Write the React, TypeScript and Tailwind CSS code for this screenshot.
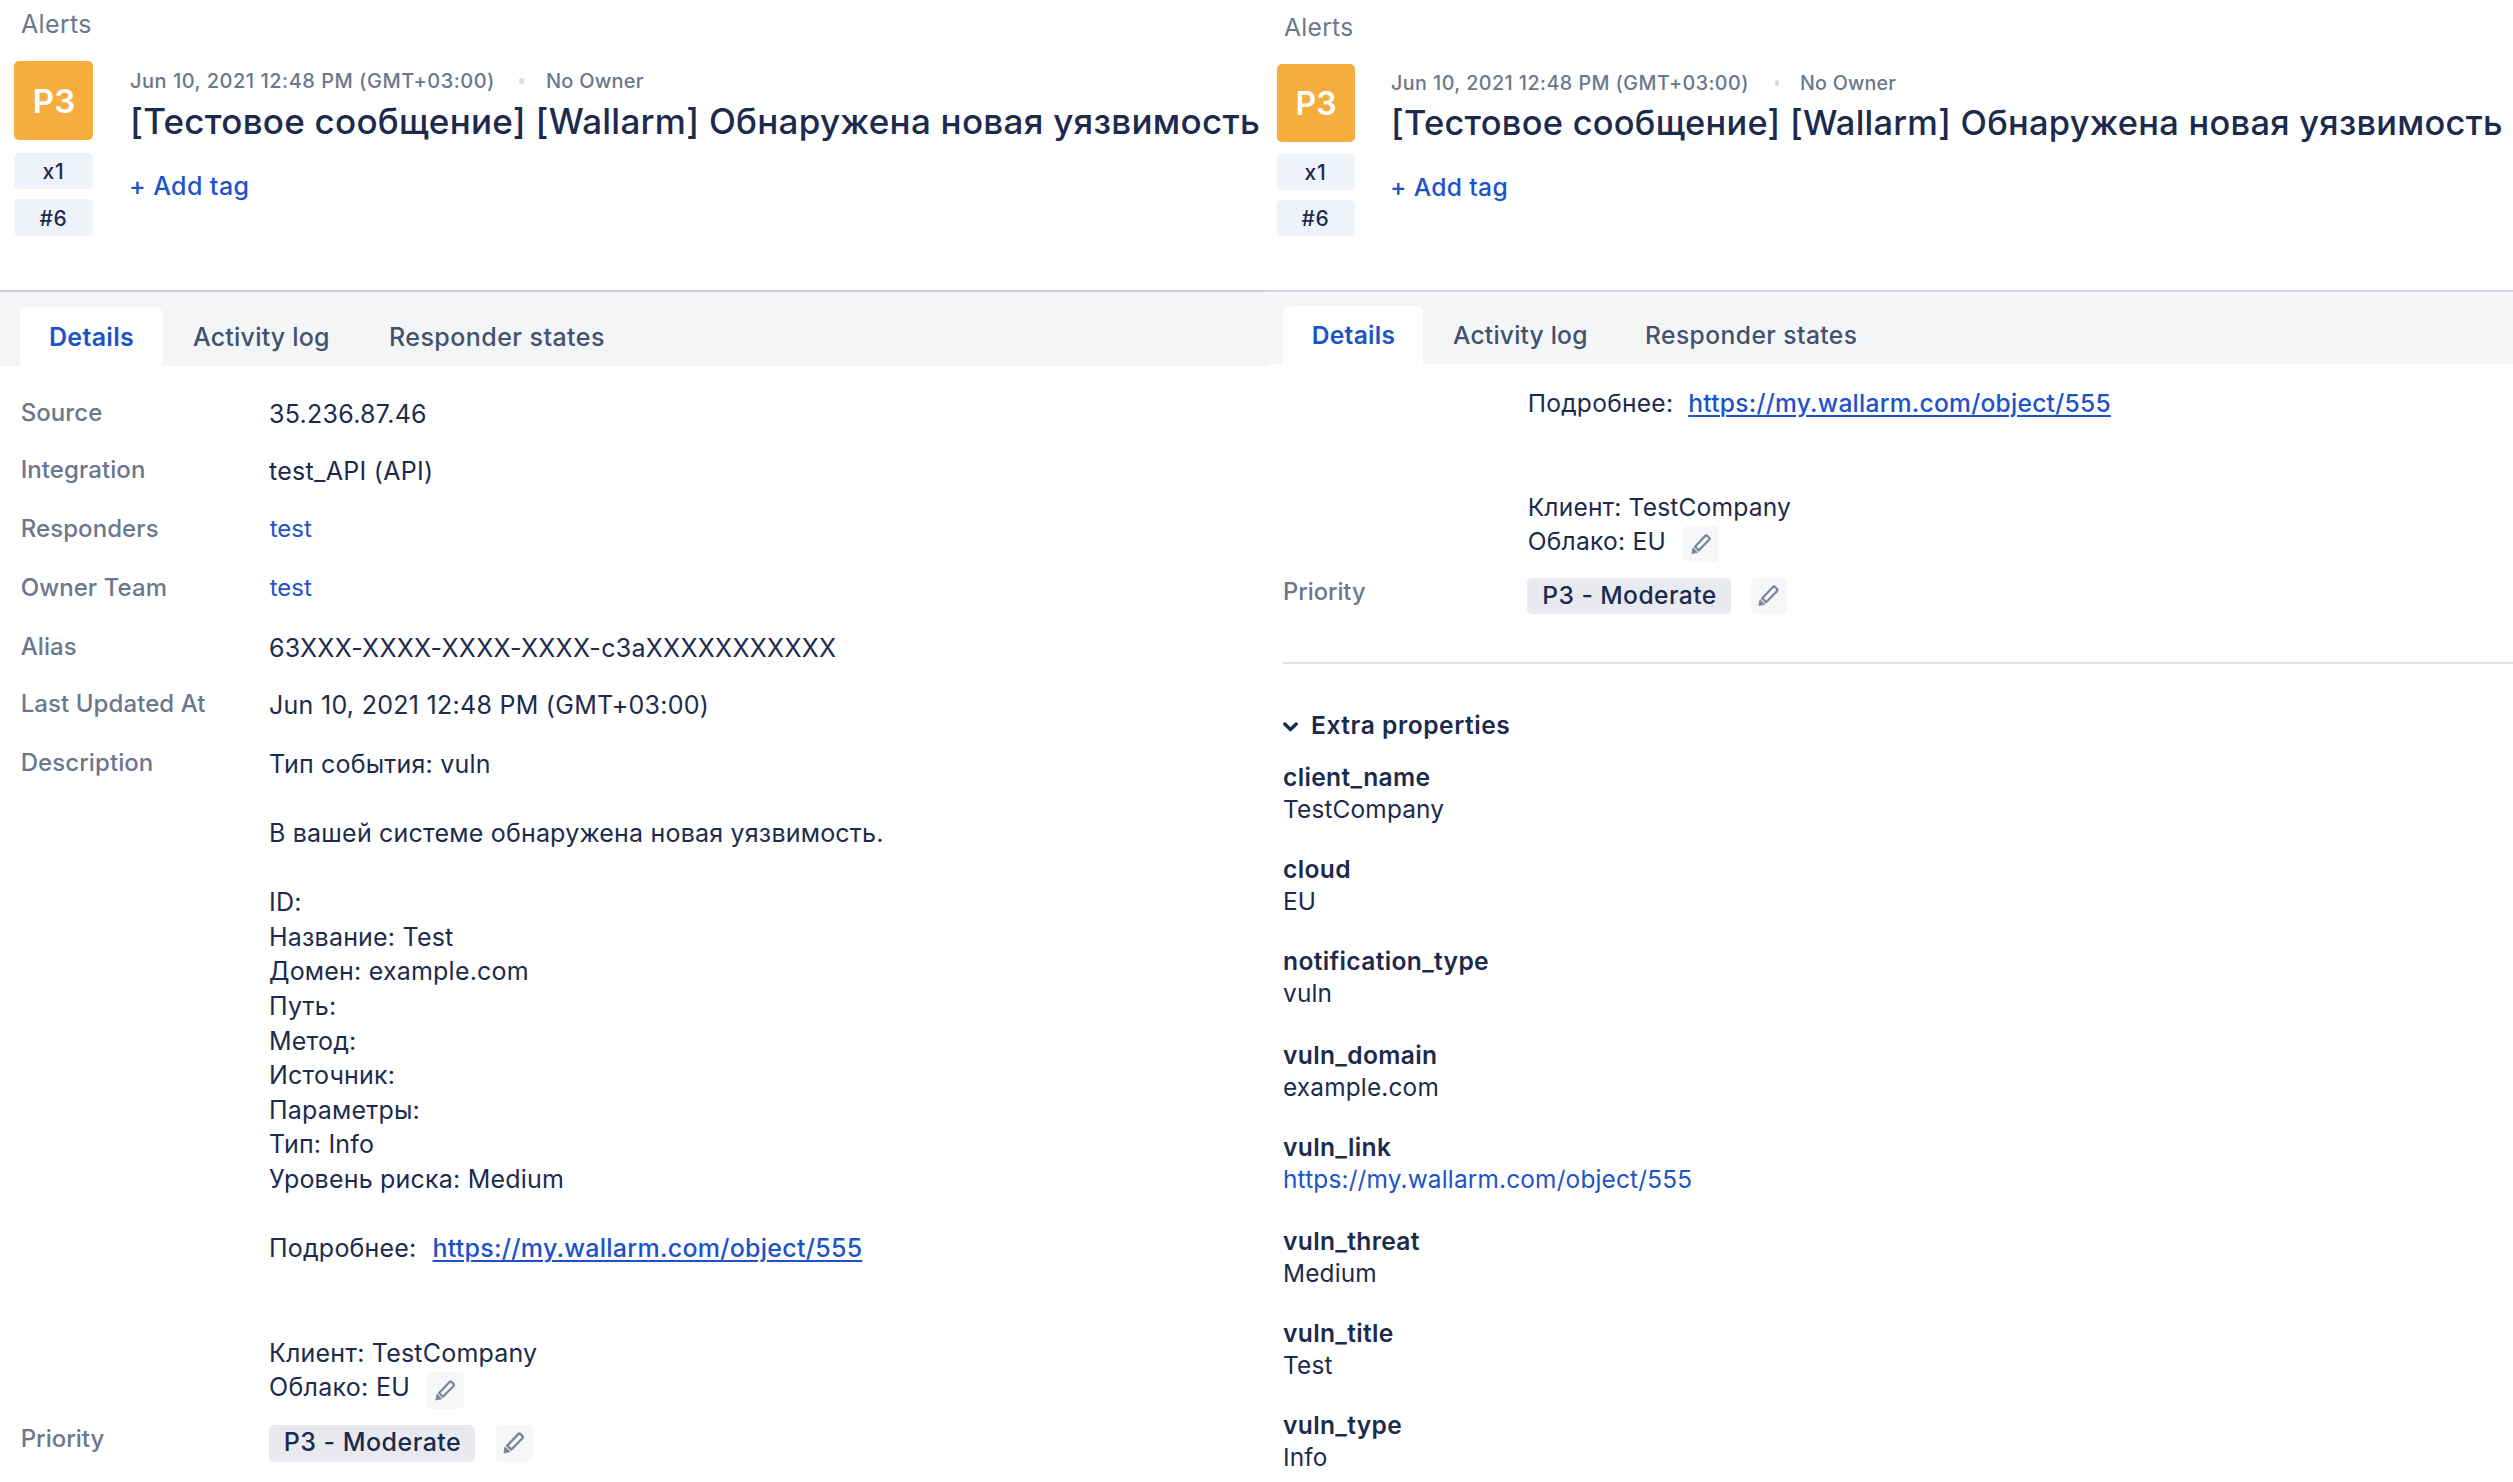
import type { ReactNode } from "react";

const LINK = "https://my.wallarm.com/object/555";

function Pencil({ className }: { className: string }) {
  return (
    <svg viewBox="0 0 22 22" className={className} fill="none">
      <path
        d="M4.3 13.6 15 2.3c.8-.8 1.9-.8 2.7 0l1.5 1.5c.8.8.8 1.9 0 2.7L8.3 17.6Z"
        stroke="#7d879b"
        strokeWidth="2.4"
        strokeLinejoin="round"
      />
      <path d="M2.1 15 .9 20.9 6.9 19.7Z" fill="#7d879b" stroke="#7d879b" strokeLinejoin="round" />
    </svg>
  );
}

type HeaderStyle = {
  crumb: string;
  row: string;
  side: string;
  level: string;
  chipA: string;
  chipB: string;
  date: string;
  dateText: string;
  dot: string;
  owner: string;
  title: string;
  tag: string;
};

function AlertHeader({ s }: { s: HeaderStyle }) {
  return (
    <header className="h-[290px]">
      <div className={`leading-[30px] text-[#6b778c] ${s.crumb}`}>Alerts</div>
      <div className={`flex ${s.row}`}>
        <div className={`shrink-0 text-center ${s.side}`}>
          <div className={`rounded-[5px] bg-[#f5ae3e] font-semibold text-white ${s.level}`}>P3</div>
          <div className={`rounded-[5px] bg-[#eff2f9] text-[21px] font-medium tracking-[0.8px] ${s.chipA}`}>x1</div>
          <div className={`rounded-[5px] bg-[#eff2f9] text-[21px] font-medium tracking-[0.8px] ${s.chipB}`}>#6</div>
        </div>
        <div className="whitespace-nowrap font-medium">
          <div className={`flex items-center leading-[24px] text-[#6b778c] ${s.date}`}>
            <span className={s.dateText}>Jun 10, 2021 12:48 PM (GMT+03:00)</span>
            <span className={`h-[6px] rounded-full bg-[#d9dce3] ${s.dot}`} />
            <span className={s.owner}>No Owner</span>
          </div>
          <h1 className={`leading-[44px] ${s.title}`}>
            [Тестовое сообщение] [Wallarm] Обнаружена новая уязвимость
          </h1>
          <div className={`leading-[30px] text-[#1d53c9] ${s.tag}`}>+ Add tag</div>
        </div>
      </div>
    </header>
  );
}

const leftHeader: HeaderStyle = {
  crumb: "pt-[9px] pl-[21px] text-[25px] tracking-[0.35px]",
  row: "mt-[22px] gap-[36px] pl-[14px]",
  side: "w-[79px]",
  level: "h-[79px] pl-px text-[33px] leading-[81px]",
  chipA: "mt-[13px] h-[36px] leading-[37px]",
  chipB: "mt-[10px] h-[37px] leading-[39px]",
  date: "mt-[8px] text-[20px]",
  dateText: "w-[390px] pl-px tracking-[0.5px]",
  dot: "w-[5px]",
  owner: "ml-[22px] tracking-[0.2px]",
  title: "mt-[6px] ml-px text-[35px] tracking-[0.26px]",
  tag: "mt-[28px] text-[25px] tracking-[0.4px]",
};

const rightHeader: HeaderStyle = {
  crumb: "pt-[12px] pl-[15px] text-[24.6px] tracking-[0.3px]",
  row: "mt-[22px] gap-[35px] pl-[8px]",
  side: "w-[78px]",
  level: "h-[78px] text-[32px] leading-[80px]",
  chipA: "mt-[12px] h-[36px] pr-px leading-[37px]",
  chipB: "mt-[10px] h-[36px] pr-px leading-[37px]",
  date: "mt-[7px] text-[19.7px]",
  dateText: "w-[385px] pl-px tracking-[0.45px]",
  dot: "w-[4px]",
  owner: "ml-[21px] tracking-[0.2px]",
  title: "mt-[6px] ml-px text-[34.4px] tracking-[0.28px]",
  tag: "mt-[27px] text-[24.6px] tracking-[0.35px]",
};

function Row({ label, height, children, link }: { label: string; height: string; children: ReactNode; link?: boolean }) {
  return (
    <div className={`flex ${height}`}>
      <div className="w-[249px] shrink-0 pl-[0.7px] text-[24px] leading-[35px] font-medium tracking-[0.08px] text-[#6b778c]">
        {label}
      </div>
      <div
        className={
          link
            ? "pl-[0.7px] text-[24px] leading-[35px] text-[#1d53c9]"
            : "pt-[2px] text-[25px] leading-[35px] tracking-[0.28px]"
        }
      >
        {children}
      </div>
    </div>
  );
}

const description = [
  "Тип события: vuln",
  "",
  "В вашей системе обнаружена новая уязвимость.",
  "",
  "ID:",
  "Название: Test",
  "Домен: example.com",
  "Путь:",
  "Метод:",
  "Источник:",
  "Параметры:",
  "Тип: Info",
  "Уровень риска: Medium",
  "",
];

function LeftPanel() {
  return (
    <section className="w-[1269px] shrink-0">
      <AlertHeader s={leftHeader} />
      <nav className="flex h-[76px] border-t-2 border-[#d0d4da] bg-[#f4f5f7] pt-[15px] pl-[20px] text-[25px] leading-[60px] font-medium text-[#42526e]">
        <div className="w-[142px] rounded-t-[6px] bg-white pl-px text-center font-semibold tracking-[0.3px] text-[#1d53c9]">
          Details
        </div>
        <div className="ml-[31px] w-[196px] tracking-[0.2px]">Activity log</div>
        <div className="tracking-[0.44px]">Responder states</div>
      </nav>
      <div className="pt-[29px] pl-[20px] whitespace-nowrap">
        <Row label="Source" height="h-[57px]">35.236.87.46</Row>
        <Row label="Integration" height="h-[59px]">test_API (API)</Row>
        <Row label="Responders" height="h-[59px]" link>test</Row>
        <Row label="Owner Team" height="h-[59px]" link>test</Row>
        <Row label="Alias" height="h-[57px]">63XXX-XXXX-XXXX-XXXX-c3aXXXXXXXXXXX</Row>
        <Row label="Last Updated At" height="h-[59px]">Jun 10, 2021 12:48 PM (GMT+03:00)</Row>
        <Row label="Description" height="h-[676px]">
          <div className="tracking-[0.2px]">
            {description.map((line, i) => (
              <div key={i} className="h-[34.57px]">{line}</div>
            ))}
            <div className="flex h-[34.57px]">
              <span className="w-[163.5px]">Подробнее:</span>
              <a className="font-medium tracking-[0.25px] text-[#1d53c9] underline decoration-2 underline-offset-[3px]">
                {LINK}
              </a>
            </div>
            <div className="mt-[71px]">Клиент: TestCompany</div>
            <div className="-mt-px flex h-[39px]">
              <span className="w-[158px] tracking-[0.3px]">Облако: EU</span>
              <span className="mt-[2px] flex h-[37px] w-[36.5px] items-center justify-center rounded-[5px] bg-[#f6f7f9]">
                <Pencil className="size-[21px]" />
              </span>
            </div>
          </div>
        </Row>
        <div className="flex">
          <div className="w-[249px] pl-[0.7px] text-[24px] leading-[35px] font-medium text-[#6b778c]">Priority</div>
          <div className="mt-[4px] h-[37px] w-[206px] rounded-[5px] bg-[#e9eaef] pl-px text-center text-[25px] leading-[35px] font-medium tracking-[0.47px]">
            P3 - Moderate
          </div>
          <div className="mt-[4px] ml-[21px] flex h-[37px] w-[37px] items-center justify-center rounded-[5px] bg-[#f6f7f9] pr-px pb-px">
            <Pencil className="size-[22px]" />
          </div>
        </div>
      </div>
    </section>
  );
}

const extra: [string, string, string][] = [
  ["client_name", "TestCompany", "h-[92px]"],
  ["cloud", "EU", "h-[92px]"],
  ["notification_type", "vuln", "h-[94px]"],
  ["vuln_domain", "example.com", "h-[92px]"],
  ["vuln_link", LINK, "h-[94px]"],
  ["vuln_threat", "Medium", "h-[92px]"],
  ["vuln_title", "Test", "h-[92px]"],
  ["vuln_type", "Info", "h-[64px]"],
];

function RightPanel() {
  return (
    <section className="w-[1244px] shrink-0">
      <AlertHeader s={rightHeader} />
      <nav className="flex h-[74px] border-t-2 border-[#d2d5de] bg-[#f4f5f7] pt-[14px] pl-[14px] text-[24.6px] leading-[58px] font-medium text-[#42526e]">
        <div className="w-[140px] rounded-t-[6px] bg-white pl-px text-center font-semibold tracking-[0.25px] text-[#1d53c9]">
          Details
        </div>
        <div className="ml-[30px] w-[192px] tracking-[0.2px]">Activity log</div>
        <div className="tracking-[0.44px]">Responder states</div>
      </nav>
      <div className="pt-[22px] pl-[14px] whitespace-nowrap">
        <div className="h-[188px] pl-[244.7px] text-[24.6px] leading-[34px] tracking-[0.24px]">
          <div className="flex">
            <span className="w-[160.5px]">Подробнее:</span>
            <a className="font-medium text-[#1d53c9] underline decoration-2 underline-offset-[3px]">{LINK}</a>
          </div>
          <div className="mt-[70px] tracking-[0.16px]">Клиент: TestCompany</div>
          <div className="flex">
            <span className="w-[155.3px]">Облако: EU</span>
            <span className="mt-[2px] flex size-[36px] items-center justify-center rounded-[5px] bg-[#f6f7f9]">
              <Pencil className="size-[20.5px]" />
            </span>
          </div>
        </div>
        <div className="flex">
          <div className="w-[244px] text-[23.7px] leading-[36px] font-medium text-[#6b778c]">Priority</div>
          <div className="mt-[4px] h-[36px] w-[204px] rounded-[5px] bg-[#e9eaef] pl-px text-center text-[24.6px] leading-[34px] font-medium tracking-[0.45px]">
            P3 - Moderate
          </div>
          <div className="mt-[4px] ml-[20px] flex size-[36px] items-center justify-center rounded-[5px] bg-[#f6f7f9] pr-px pb-px">
            <Pencil className="size-[21.5px]" />
          </div>
        </div>
        <div className="mt-[48px] h-[2px] bg-[#dfe2e7]" />
        <div className="mt-[44px] flex items-center text-[24.6px] leading-[34px] font-semibold tracking-[0.54px]">
          <svg viewBox="0 0 15 10" className="mt-[3px] mr-[13px] h-[10px] w-[15px]" fill="none">
            <path d="M1.8 2 7.5 7.6 13.2 2" stroke="#172b4d" strokeWidth="3.4" strokeLinecap="round" strokeLinejoin="round" />
          </svg>
          Extra properties
        </div>
        <div className="pt-[19px] leading-[32px]">
          {extra.map(([name, value, height]) => (
            <div key={name} className={height}>
              <div className="text-[24.6px] font-semibold tracking-[0.34px]">{name}</div>
              <div className={`text-[24.4px] tracking-[0.17px] ${value === LINK ? "text-[#1d53c9]" : ""}`}>{value}</div>
            </div>
          ))}
        </div>
      </div>
    </section>
  );
}

export default function App() {
  return (
    <main className="flex h-[1482px] w-[2513px] overflow-hidden bg-white font-['Inter',sans-serif] text-[#1c2b4d]">
      <LeftPanel />
      <RightPanel />
    </main>
  );
}
